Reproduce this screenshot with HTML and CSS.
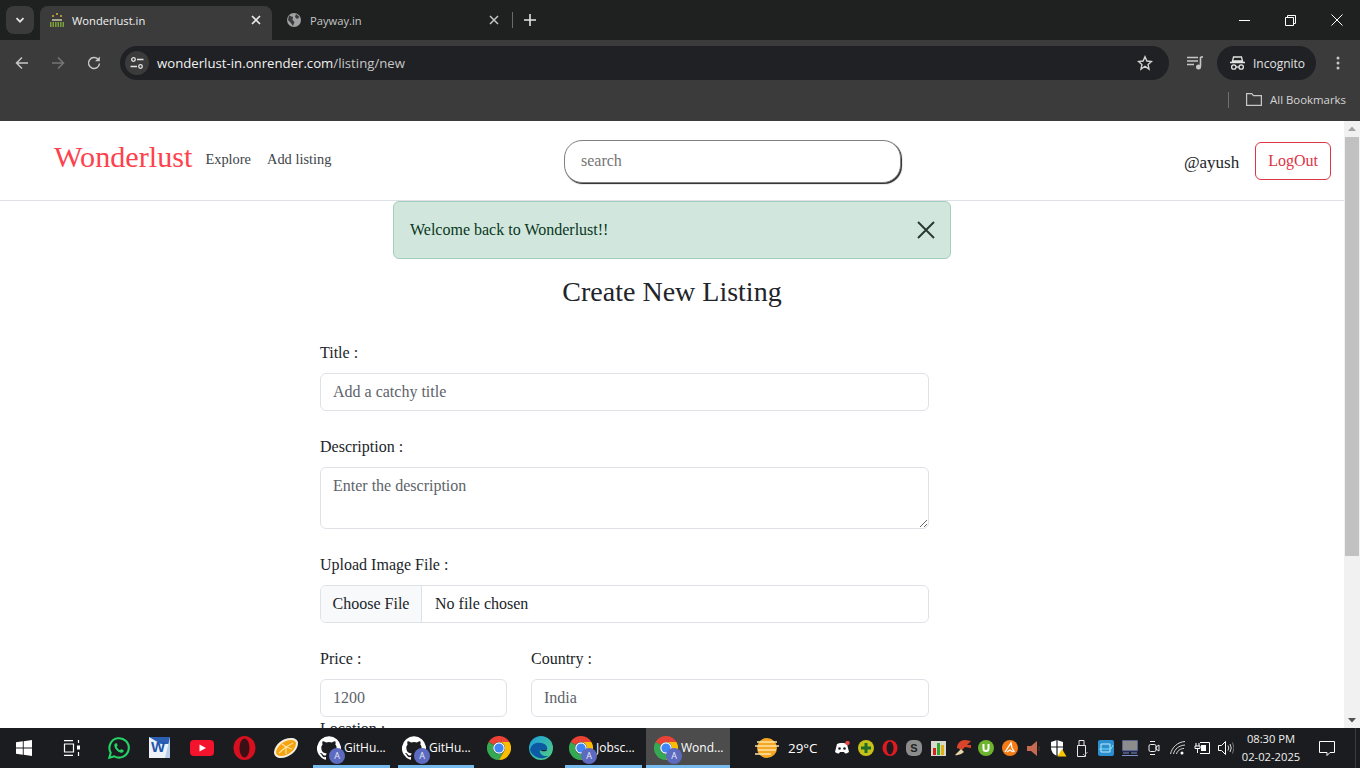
FILE: index.html
```html
<!DOCTYPE html>
<html lang="en">
<head>
<meta charset="utf-8">
<title>Wonderlust.in</title>
<link rel="stylesheet" href="styles.css">
</head>
<body>
<svg class="defs" width="0" height="0" aria-hidden="true">
  <symbol id="chrome" viewBox="0 0 24 24">
    <path fill="#ea4335" d="M1.6 6A12 12 0 0 1 22.4 6H12a6 6 0 0 0-5.2 3z"/>
    <path fill="#34a853" d="M1.6 6A12 12 0 0 0 12 24l5.2-9a6 6 0 0 1-10.4-6z"/>
    <path fill="#fbbc04" d="M22.4 6A12 12 0 0 1 12 24l5.2-9A6 6 0 0 0 17.2 9 6 6 0 0 0 12 6z"/>
    <circle cx="12" cy="12" r="5.8" fill="#fff"/>
    <circle cx="12" cy="12" r="4.6" fill="#4285f4"/>
  </symbol>
  <symbol id="octo" viewBox="0 0 24 24">
    <path fill="#fff" d="M12 .3a12 12 0 0 0-3.8 23.4c.6.1.8-.3.8-.6v-2c-3.3.7-4-1.6-4-1.6-.6-1.4-1.4-1.8-1.4-1.8-1-.7.1-.7.1-.7 1.2 0 1.9 1.2 1.9 1.2 1 1.8 2.8 1.3 3.5 1 0-.8.4-1.3.7-1.6-2.7-.3-5.5-1.3-5.5-6 0-1.2.5-2.3 1.3-3.1-.2-.4-.6-1.6 0-3.2 0 0 1-.3 3.4 1.2a11.5 11.5 0 0 1 6 0c2.3-1.5 3.3-1.2 3.3-1.2.6 1.6.2 2.8 0 3.2.9.8 1.3 1.9 1.3 3.2 0 4.6-2.8 5.6-5.5 5.9.5.4.9 1 .9 2.2v3.3c0 .3.1.7.8.6A12 12 0 0 0 12 .3"/>
  </symbol>
</svg>

<div class="screen">
  <header class="browser">
    <div class="tabstrip">
      <button class="tab-menu"><svg width="12" height="12" viewBox="0 0 12 12"><path d="M2.5 4.2 6 7.7l3.5-3.5" fill="none" stroke="#e3e3e3" stroke-width="1.8"/></svg></button>
      <div class="tab tab-active">
        <svg class="favicon" width="16" height="16" viewBox="0 0 16 16"><path d="M1 15V10h14v5z" fill="#7d9c48"/><path d="M3 10v5M5.500 10v5M8 10v5M10.500 10v5M13 10v5" stroke="#39421f" stroke-width="1"/><path d="M3 8h10" stroke="#a8a58b" stroke-width="2"/><circle cx="8" cy="2" r="1" fill="#d7b13a"/><circle cx="4" cy="4" r="1" fill="#d7b13a"/><circle cx="12" cy="4" r="1" fill="#d7b13a"/></svg>
        <span class="tab-title">Wonderlust.in</span>
        <svg class="tab-close" width="10" height="10" viewBox="0 0 10 10"><path d="M1 1l8 8M9 1l-8 8" stroke="#e8e8e8" stroke-width="1.700"/></svg>
      </div>
      <div class="tab tab-idle">
        <svg class="favicon" width="16" height="16" viewBox="0 0 16 16"><circle cx="8" cy="8" r="7" fill="#a0a1a3"/><path d="M3 3.500 7 5 6.500 8 8.500 10 7 14 4.500 10.500 2 8zM10 2l3.500 3L11 7 9 5z" fill="#3a3b3d"/></svg>
        <span class="tab-title">Payway.in</span>
        <svg class="tab-close" width="10" height="10" viewBox="0 0 10 10"><path d="M1 1l8 8M9 1l-8 8" stroke="#c4c7c5" stroke-width="1.500"/></svg>
      </div>
      <span class="tab-sep"></span>
      <svg class="tab-new" width="12" height="12" viewBox="0 0 12 12"><path d="M6 0v12M0 6h12" stroke="#e3e3e3" stroke-width="1.600"/></svg>
      <div class="win-controls">
        <svg width="11" height="11" viewBox="0 0 11 11"><path d="M0 5.500h11" stroke="#fff"/></svg>
        <svg width="11" height="11" viewBox="0 0 11 11"><path d="M.5 2.500h8v8h-8zM2.500 2.500v-2h8v8h-2" fill="none" stroke="#fff"/></svg>
        <svg width="12" height="12" viewBox="0 0 12 12"><path d="M.5.500l11 11M11.500.500l-11 11" stroke="#fff"/></svg>
      </div>
    </div>
    <div class="toolbar">
      <svg class="nav-ic" width="16" height="16" viewBox="0 0 16 16"><path d="M14 8H2.500M8 2.500 2.500 8 8 13.500" fill="none" stroke="#c7c7c7" stroke-width="1.500"/></svg>
      <svg class="nav-ic" width="16" height="16" viewBox="0 0 16 16"><path d="M2 8h11.500M8 2.500 13.500 8 8 13.500" fill="none" stroke="#747775" stroke-width="1.500"/></svg>
      <svg class="nav-ic" width="16" height="16" viewBox="0 0 16 16"><path d="M13.500 8.500A5.500 5.500 0 1 1 12 4.200" fill="none" stroke="#c7c7c7" stroke-width="1.500"/><path d="M13.800 1.500v4.700H9.100" fill="#c7c7c7"/></svg>
      <div class="omnibox">
        <span class="tune"><svg width="14" height="14" viewBox="0 0 14 14"><g fill="none" stroke="#e3e3e3" stroke-width="1.300"><circle cx="3.500" cy="3.500" r="1.800"/><path d="M7 3.500h6.500M.5 10.500H7"/><circle cx="10.500" cy="10.500" r="1.800"/></g></svg></span>
        <span class="url"><span class="url-host">wonderlust-in.onrender.com</span>/listing/new</span>
        <svg class="star" width="16" height="16" viewBox="0 0 16 16"><path d="M8 1.800l1.900 4.200 4.600.5-3.400 3.100.9 4.500L8 11.300l-4 2.800.9-4.500L1.500 6.500l4.600-.5z" fill="none" stroke="#d5d5d5" stroke-width="1.400"/></svg>
      </div>
      <svg class="media" width="16" height="14" viewBox="0 0 16 14"><path d="M0 1.500h11M0 5h11M0 8.500h7" stroke="#c7c7c7" stroke-width="1.400"/><path d="M13.500 1v9.500" stroke="#c7c7c7" stroke-width="1.600"/><path d="M13.500 1H16" stroke="#c7c7c7" stroke-width="1.600"/><circle cx="11.500" cy="11" r="2.500" fill="#c7c7c7"/></svg>
      <div class="incognito">
        <svg width="15" height="14" viewBox="0 0 15 14"><path d="M3.500 1h8l1 4h-10zM0 6.500h15" fill="none" stroke="#e3e3e3" stroke-width="1.300"/><circle cx="3.800" cy="11" r="2.200" fill="none" stroke="#e3e3e3" stroke-width="1.300"/><circle cx="11.200" cy="11" r="2.200" fill="none" stroke="#e3e3e3" stroke-width="1.300"/><path d="M6 11h3" stroke="#e3e3e3" stroke-width="1.300"/></svg>
        <span>Incognito</span>
      </div>
      <svg class="kebab" width="4" height="14" viewBox="0 0 4 14"><circle cx="2" cy="2" r="1.500" fill="#c7c7c7"/><circle cx="2" cy="7" r="1.500" fill="#c7c7c7"/><circle cx="2" cy="12" r="1.500" fill="#c7c7c7"/></svg>
    </div>
    <div class="bookmarks">
      <span class="bm-sep"></span>
      <svg width="16" height="13" viewBox="0 0 16 13"><path d="M.6.600h5.200l1.600 2h8v9.800H.6z" fill="none" stroke="#c7c7c7" stroke-width="1.200"/></svg>
      <span class="bm-text">All Bookmarks</span>
    </div>
  </header>

  <div class="viewport">
    <main class="page">
      <nav class="navbar">
        <div class="nav-left">
          <a class="brand">Wonderlust</a>
          <a class="nav-link">Explore</a>
          <a class="nav-link">Add listing</a>
        </div>
        <input class="search" placeholder="search">
        <div class="nav-right">
          <span class="user">@ayush</span>
          <a class="logout">LogOut</a>
        </div>
      </nav>
      <div class="alert">
        <span>Welcome back to Wonderlust!!</span>
        <svg width="18" height="18" viewBox="0 0 18 18"><path d="M1 1l16 16M17 1 1 17" stroke="#2a3a33" stroke-width="2"/></svg>
      </div>
      <h3 class="title">Create New Listing</h3>
      <form class="form">
        <div class="field">
          <label class="label">Title :</label>
          <input class="control" placeholder="Add a catchy title">
        </div>
        <div class="field">
          <label class="label">Description :</label>
          <textarea class="control area" placeholder="Enter the description"></textarea>
        </div>
        <div class="field">
          <label class="label">Upload Image File :</label>
          <div class="control file">
            <span class="file-btn">Choose File</span>
            <span class="file-name">No file chosen</span>
          </div>
        </div>
        <div class="row">
          <div class="field col-price">
            <label class="label">Price :</label>
            <input class="control" placeholder="1200">
          </div>
          <div class="field col-country">
            <label class="label">Country :</label>
            <input class="control" placeholder="India">
          </div>
        </div>
        <div class="field">
          <label class="label">Location :</label>
        </div>
      </form>
    </main>
    <aside class="scrollbar">
      <svg width="16" height="16" viewBox="0 0 16 16"><path d="M4 10l4-4.500 4 4.500z" fill="#a3a3a3"/></svg>
      <div class="track"><div class="thumb"></div></div>
      <svg width="16" height="16" viewBox="0 0 16 16"><path d="M4 6l4 4.500L12 6z" fill="#505050"/></svg>
    </aside>
  </div>

  <footer class="taskbar">
    <span class="tb-start"><svg width="16" height="16" viewBox="0 0 16 16"><path fill="#fff" d="M0 2.300 6.800 1.300v6.300H0zM7.700 1.200 16 0v7.600H7.700zM0 8.400h6.800v6.300L0 13.700zM7.700 8.400H16V16l-8.300-1.200z"/></svg></span>
    <span class="tb-view"><svg width="17" height="16" viewBox="0 0 17 16"><g fill="none" stroke="#fff" stroke-width="1.200"><path d="M1 .6h9M1 15.400h9M1.500 4h9v8h-9z"/><path d="M15.500 0v3M15.500 12v4"/></g><rect x="14" y="5.500" width="3" height="4" fill="#fff"/></svg></span>
    <span class="tb-app"><svg width="25" height="25" viewBox="0 0 24 24"><path d="M3.200 20.800 4.500 16A9.300 9.300 0 1 1 8 19.500z" fill="none" stroke="#25d366" stroke-width="2"/><path d="M8.800 7.200c-.8.700-1 1.800-.6 3 .8 2.500 3 4.700 5.500 5.600 1.200.4 2.300.1 3-.7l.4-1.300-2.500-1.300-1.100 1.200c-1.300-.5-2.700-1.900-3.300-3.300l1-1.100L10.500 7z" fill="#25d366"/></svg></span>
    <span class="tb-app"><svg width="22" height="22" viewBox="0 0 22 22"><rect x="0" y="0" width="21" height="21" fill="#eef3fa"/><path d="M0 0h21v7H12z" fill="#2b5fb4"/><path d="M21 0v21h-5z" fill="#b9cde9"/><text x="2" y="15" class="word-w">W</text></svg></span>
    <span class="tb-app"><svg width="24" height="16" viewBox="0 0 24 16"><rect width="24" height="16" rx="4" fill="#f4132d"/><path d="M9.500 4.500 16 8l-6.500 3.500z" fill="#fff"/></svg></span>
    <span class="tb-app"><svg width="23" height="24" viewBox="0 0 23 24"><ellipse cx="11.500" cy="12" rx="11" ry="12" fill="#d70f1e"/><ellipse cx="11.500" cy="12" rx="5" ry="9.500" fill="#3a1014"/></svg></span>
    <span class="tb-app"><svg width="24" height="20" viewBox="0 0 24 20"><path d="M0 14C1 6 9 0 17 0c4 0 7 2 7 5 0 8-9 15-17 15-4 0-7-2-7-6z" fill="#f6efe0"/><path d="M2 14C3 8 10 2 17 2c3 0 5 1.300 5 3.300C22 12 14 18 7 18c-3 0-5-1.500-5-4z" fill="#f7a30f"/><path d="M5 15 12 9M12 16 12 9M19 5 12 9M8 6 12 9M18 11 12 9" stroke="#ffe39a" stroke-width="1.200"/></svg></span>
    <span class="tb-task tb-gap5"><span class="tb-badged"><svg width="24" height="24"><use href="#octo"/></svg><span class="badge">A</span></span><span class="tb-label">GitHu...</span></span>
    <span class="tb-task tb-short tb-gap8"><span class="tb-badged"><svg width="24" height="24"><use href="#octo"/></svg><span class="badge">A</span></span><span class="tb-label">GitHu...</span></span>
    <span class="tb-app tb-gap4"><svg width="24" height="24"><use href="#chrome"/></svg></span>
    <span class="tb-app"><svg width="24" height="24" viewBox="0 0 24 24"><defs><linearGradient id="edge" x1="0" y1="0" x2="1" y2="1"><stop offset="0" stop-color="#1b9de2"/><stop offset="1" stop-color="#52d17c"/></linearGradient></defs><circle cx="12" cy="12" r="12" fill="url(#edge)"/><path d="M1 14C2 8 7 6 12 7c5 .7 7 4 6 7h-7c-1 3 2 6 6 6 1.500 0 2.500-.3 3-.6A12 12 0 0 1 1 14z" fill="#0c59a4"/><path d="M11 14h7c-1 1.500-4 2-7 0z" fill="#1b1c1f"/></svg></span>
    <span class="tb-task tb-gap3"><span class="tb-badged"><svg width="24" height="24"><use href="#chrome"/></svg><span class="badge">A</span></span><span class="tb-label">Jobsc...</span></span>
    <span class="tb-task tb-active tb-gap4"><span class="tb-badged"><svg width="24" height="24"><use href="#chrome"/></svg><span class="badge">A</span></span><span class="tb-label">Wond...</span></span>
    <span class="weather">
      <svg width="24" height="22" viewBox="0 0 24 22"><circle cx="12" cy="11" r="10" fill="#f5a623"/><path d="M2 5h20M0 9h24M3 13h18M0 17h16" stroke="#fde3a6" stroke-width="1.400"/></svg>
      <span>29°C</span>
    </span>
    <span class="tray">
      <span class="tray-ic"><svg width="16" height="14" viewBox="0 0 16 14"><path d="M1 11 3 3q2-1 4-1h2q2 0 4 1l2 8q-2 1.500-4 1.500L10 11H6l-1 1.500Q3 12.500 1 11z" fill="#fff"/><circle cx="5.500" cy="7.500" r="1.300" fill="#1b1c1f"/><circle cx="10.500" cy="7.500" r="1.300" fill="#1b1c1f"/><circle cx="13.500" cy="2" r="2.200" fill="#f04747"/></svg></span>
      <span class="tray-ic"><svg width="16" height="16" viewBox="0 0 16 16"><circle cx="8" cy="8" r="8" fill="#c7c21a"/><path d="M8 3v10M3 8h10" stroke="#1e6b2a" stroke-width="3"/></svg></span>
      <span class="tray-ic"><svg width="16" height="16" viewBox="0 0 16 16"><ellipse cx="8" cy="8" rx="7.500" ry="8" fill="#e01a23"/><ellipse cx="8" cy="8" rx="3.500" ry="6.500" fill="#1b1c1f"/></svg></span>
      <span class="tray-ic"><svg width="16" height="16" viewBox="0 0 16 16"><rect width="16" height="16" rx="6" fill="#8c8c8c"/><text x="8" y="12" class="tray-s">S</text></svg></span>
      <span class="tray-ic"><svg width="15" height="15" viewBox="0 0 15 15"><rect width="15" height="15" fill="#d8d8d0"/><rect x="2" y="7" width="3" height="7" fill="#d92020"/><rect x="6" y="2" width="3" height="12" fill="#2ea82e"/><rect x="10" y="4" width="3" height="10" fill="#e0b010"/></svg></span>
      <span class="tray-ic"><svg width="17" height="16" viewBox="0 0 17 16"><path d="M17 1 11 0C6 0 3 4 3 8l5 2 3-3 6 1V5h-4z" fill="#d9452b"/><path d="M1 15 7 9l3 3q-4 4-9 3z" fill="#e8d6a8"/></svg></span>
      <span class="tray-ic"><svg width="16" height="16" viewBox="0 0 16 16"><circle cx="8" cy="8" r="8" fill="#6eb52f"/><path d="M4.500 4v4.500a3.500 3.500 0 0 0 7 0V4h-2v4.500a1.500 1.500 0 0 1-3 0V4z" fill="#fff"/></svg></span>
      <span class="tray-ic"><svg width="16" height="16" viewBox="0 0 16 16"><circle cx="8" cy="8" r="8" fill="#f47b16"/><path d="M3 12 9 3l1 5 2.500 4M5 12l3-2 3 2" fill="none" stroke="#fff" stroke-width="1.300"/></svg></span>
      <span class="tray-ic"><svg width="15" height="15" viewBox="0 0 15 15"><path d="M0 5h4l6-5v15L4 10H0z" fill="#c66a52"/><path d="M12 5v5" stroke="#4a3a36"/></svg></span>
      <span class="tray-ic"><svg width="17" height="17" viewBox="0 0 17 17"><path d="M7 0 13 2v6q0 5-6 8-6-3-6-8V2z" fill="#fff"/><path d="M7 0v16M1 7h12" stroke="#1b1c1f" stroke-width="1.200"/><path d="M12 9l4.500 7.500h-9z" fill="#f7c600"/></svg></span>
      <span class="tray-ic"><svg width="12" height="17" viewBox="0 0 12 17"><path d="M3 .5h5v5H3zM1.500 5.500h8v11h-8z" fill="none" stroke="#e8e8e8"/><path d="M7 14l1.500 1.500L11.500 12" fill="none" stroke="#aaa"/></svg></span>
      <span class="tray-ic"><svg width="16" height="16" viewBox="0 0 16 16"><rect width="16" height="16" rx="2" fill="#2b8fd0"/><path d="M3 4h9v8H3z" fill="none" stroke="#c7eaf7"/><path d="M1 9h12l2-4" stroke="#7be0f0" fill="none"/></svg></span>
      <span class="tray-ic"><svg width="16" height="16" viewBox="0 0 16 16"><rect width="16" height="11" fill="#8d8d8d" stroke="#2a3a8a"/><path d="M1 13h6M9 13h6M0 15.500h16" stroke="#7d8fd0"/></svg></span>
      <span class="tray-ic"><svg width="12" height="16" viewBox="0 0 12 16"><rect x="1" y="4.500" width="7" height="7" rx="1.500" fill="none" stroke="#eee"/><path d="M8 7l3-2v6l-3-2z" fill="none" stroke="#eee"/><path d="M2 1.500h5M2 14.500h5" stroke="#eee" stroke-width="1.200"/></svg></span>
      <span class="tray-ic"><svg width="16" height="14" viewBox="0 0 16 14"><g fill="none" stroke="#d8d8d8"><path d="M.5 13C2 6 8 1 15 .5"/><path d="M3.500 13C4.500 8 9 4.500 15 4"/><path d="M6.500 13C7 10 10.500 7.500 14 7.500"/></g><circle cx="12" cy="12" r="1.500" fill="#fff"/></svg></span>
      <span class="tray-ic"><svg width="16" height="12" viewBox="0 0 16 12"><path d="M6 .5h9.500v11H6" fill="none" stroke="#fff"/><rect x="7" y="3" width="5" height="6" fill="#fff"/><path d="M2 1v3M5 1v3M1 4h5v2.500H1zM3.500 6.500V11" stroke="#fff" fill="none"/></svg></span>
      <span class="tray-ic"><svg width="16" height="14" viewBox="0 0 16 14"><path d="M.5 4.500h3l4-4v13l-4-4h-3z" fill="none" stroke="#fff"/><path d="M10 4.500q1.500 2.500 0 5M12 3q2.500 4 0 8" fill="none" stroke="#ddd"/><path d="M14.500 1.500q3 5.500 0 11" fill="none" stroke="#777"/></svg></span>
    </span>
    <span class="clock"><span>08:30 PM</span><span>02-02-2025</span></span>
    <span class="notify"><svg width="16" height="15" viewBox="0 0 16 15"><path d="M.5.500h15v11h-4.500l-3 3v-3H.5z" fill="none" stroke="#fff"/></svg></span>
    <span class="desktop-edge"></span>
  </footer>
</div>
</body>
</html>
```
FILE: styles.css
```css
* { box-sizing: border-box; }
html, body { margin: 0; padding: 0; height: 100%; overflow: hidden; }
body { font-family: "Liberation Serif", "Times New Roman", serif; font-size: 16px; color: #212529; background: #fff; }
.defs { display: block; width: 0; height: 0; }

.screen { width: 1360px; height: 768px; display: flex; flex-direction: column; overflow: hidden; }

/* browser chrome */
.browser { height: 121px; flex: none; display: flex; flex-direction: column; font-family: "Open Sans", "Noto Sans", sans-serif; background: #3b3b3b; }
.tabstrip { height: 40px; background: #1f2020; display: flex; align-items: flex-end; padding-left: 6px; }
.tab-menu { width: 28px; height: 28px; margin-bottom: 6px; margin-right: 6px; border: 0; border-radius: 8px; background: #3b3b3b; display: flex; align-items: center; justify-content: center; padding: 0; }
.tab { width: 232px; height: 34px; display: flex; align-items: center; padding: 0 11px 6px 9px; color: #c4c7c5; font-size: 11.200px; }
.tab-active { background: #3b3b3b; border-radius: 8px 8px 0 0; color: #f1f1f1; }
.tab-title { margin-left: 7px; flex: 1; }
.tab-idle { margin-left: 5px; padding-right: 10px; }
.tab-idle .tab-title { margin-left: 8px; }
.tab-close { flex: none; }
.tab-sep { width: 1px; height: 16px; background: #6a6a6a; margin: 0 0 12px 3px; }
.tab-new { margin: 0 0 14px 11px; }
.win-controls { margin-left: auto; height: 40px; align-self: flex-start; display: flex; align-items: center; gap: 35px; padding-right: 17px; }

.toolbar { height: 41px; display: flex; align-items: center; padding: 5px 0 0 14px; }
.nav-ic { flex: none; margin-right: 20px; }
.omnibox { flex: none; width: 1049px; height: 34px; margin-left: -2px; background: #202124; border-radius: 17px; display: flex; align-items: center; padding: 0 16px 0 5px; }
.tune { width: 24px; height: 24px; border-radius: 50%; background: #3b3b3b; display: flex; align-items: center; justify-content: center; }
.url { margin-left: 8px; flex: 1; color: #c7c7c7; font-size: 13.200px; }
.url-host { color: #f1f1f1; }
.media { flex: none; margin-left: 18px; }
.incognito { flex: none; width: 99px; height: 34px; margin-left: 14px; border-radius: 17px; background: #202124; display: flex; align-items: center; gap: 8px; padding-left: 13px; color: #e3e3e3; font-size: 12px; }
.kebab { flex: none; margin-left: 20px; }

.bookmarks { height: 40px; display: flex; align-items: center; justify-content: flex-end; padding: 0 14px 3px 0; }
.bm-sep { width: 1px; height: 16px; background: #6f6f6f; margin-right: 17px; }
.bm-text { margin-left: 8px; color: #d5d5d5; font-size: 11.400px; }

/* page */
.viewport { height: 607px; flex: none; display: flex; }
.page { flex: 1; min-width: 0; overflow: hidden; }
.navbar { height: 80px; border-bottom: 1px solid #dee2e6; display: flex; align-items: center; padding: 0 13px 0 54px; }
.nav-left { display: flex; align-items: center; width: 510px; flex: none; margin-top: -6px; }
.brand { color: #fe424d; font-size: 30.200px; margin-right: 13px; }
.nav-link { color: #3d4349; font-size: 14.400px; margin: 4px 16px 0 0; }
.search { width: 337px; height: 43px; border: 1px solid #808080; border-radius: 18px; box-shadow: 1px 1px 1px #222; padding: 0 16px; font: inherit; outline: 0; margin-top: 1px; }
.search::placeholder { color: #757575; }
.nav-right { margin-left: auto; display: flex; align-items: center; }
.user { font-size: 17px; color: #212529; margin: 4px 16px 0 0; }
.logout { height: 38px; padding: 0 12px; border: 1px solid #dc3545; border-radius: 6px; color: #dc3545; display: flex; align-items: center; }

.alert { width: 558px; height: 58px; margin-left: 393px; background: #d1e7dd; border: 1px solid #a3cfbb; border-radius: 6px; color: #0a3622; display: flex; align-items: center; justify-content: space-between; padding: 0 15px 0 16px; }
.title { margin: 16px 0 0; font-size: 28px; font-weight: 400; line-height: 34px; text-align: center; }
.form { width: 609px; margin: 32px 0 0 320px; }
.field { margin-bottom: 24px; }
.label { display: block; line-height: 24px; margin-bottom: 8px; color: #212529; }
.control { display: block; width: 100%; height: 38px; border: 1px solid #dee2e6; border-radius: 6px; padding: 6px 12px; font: inherit; line-height: 24px; color: #212529; background: #fff; outline: 0; }
.control::placeholder { color: #5c636a; }
.area { height: 62px; resize: vertical; }
.file { display: flex; padding: 0; overflow: hidden; }
.file-btn { width: 101px; flex: none; background: #f8f9fa; border-right: 1px solid #dee2e6; display: flex; align-items: center; justify-content: center; }
.file-name { padding-left: 13px; display: flex; align-items: center; }
.row { display: flex; gap: 24px; }
.col-price { width: 187px; flex: none; margin-bottom: 0; }
.col-country { flex: 1; margin-bottom: 0; }

/* scrollbar */
.scrollbar { width: 16px; flex: none; background: #f1f1f1; display: flex; flex-direction: column; }
.track { flex: 1; min-height: 0; }
.thumb { height: 419px; margin: 0 1px; background: #c1c1c1; }

/* taskbar */
.taskbar { height: 40px; flex: none; background: #1b1c1f; display: flex; align-items: center; font-family: "Open Sans", "Noto Sans", sans-serif; color: #fff; }
.taskbar > span { height: 40px; display: flex; align-items: center; }
.tb-start { width: 48px; justify-content: center; }
.tb-view { width: 47px; justify-content: center; margin-right: 2px; }
.tb-app { width: 42px; justify-content: center; flex: none; }
.tb-task { width: 77px; flex: none; padding: 0 0 0 4px; border-bottom: 3px solid #76b9ed; }
.tb-short { width: 76px; }
.tb-active { width: 84px; padding-left: 8px; background: #4c4c4c; }
.tb-gap5 { margin-left: 6px; }
.tb-gap8 { margin-left: 8px; }
.tb-gap4 { margin-left: 4px; }
.tb-gap3 { margin-left: 3px; }
.tb-badged { position: relative; width: 24px; height: 24px; flex: none; margin-top: 3px; }
.badge { position: absolute; right: -4px; bottom: -4px; width: 16px; height: 16px; border-radius: 50%; background: #5c6bc0; color: #e8eaf6; font-size: 9px; line-height: 16px; text-align: center; }
.tb-label { margin: 2px 0 0 3px; font-size: 12px; white-space: nowrap; }
.weather { margin-left: 25px; width: 75px; flex: none; gap: 9px; font-size: 13.400px; }
.tray { flex: none; }
.tray-ic { width: 24px; height: 40px; display: flex; align-items: center; justify-content: center; }
.clock { width: 66px; flex: none; flex-direction: column; justify-content: center; font-size: 11.200px; line-height: 18px; text-align: center; color: #f0f0f0; }
.notify { width: 46px; flex: none; justify-content: center; }
.desktop-edge { width: 1px; margin-left: 5px; background: #3a3b3e; }
.word-w { font: 700 15px "Liberation Sans", sans-serif; fill: #1f56ad; }
.tray-s { font: 700 11px "Liberation Sans", sans-serif; fill: #222; text-anchor: middle; }
```
